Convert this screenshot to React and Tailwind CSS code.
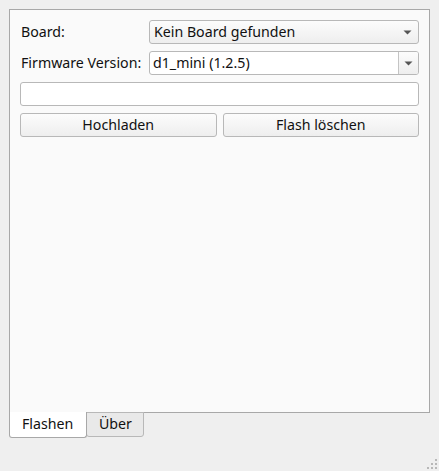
import { useState } from 'react'

function Arrow() {
  return (
    <svg width="9" height="5" viewBox="0 0 9 5" className="block">
      <path d="M0.5 0.5 L8.5 0.5 L4.5 4.5 Z" fill="#555" />
    </svg>
  )
}

function SizeGrip() {
  const dots = [
    [8, 0],
    [4, 4], [8, 4],
    [0, 8], [4, 8], [8, 8],
  ]
  return (
    <div className="absolute right-[2px] bottom-[2px] w-[10px] h-[10px]">
      {dots.map(([x, y], i) => (
        <span
          key={i}
          className="absolute w-[2px] h-[2px] bg-[#b8b8b8]"
          style={{ left: x, top: y }}
        />
      ))}
    </div>
  )
}

export default function App() {
  const [tab, setTab] = useState('flash')

  return (
    <div className="relative w-[439px] h-[471px] bg-[#efefef] text-[#111] font-['Noto_Sans','Open_Sans',sans-serif] text-[14.2px] leading-none">
      <div className="pt-[9px] px-[9px]">
        <div className="h-[404px] border border-[#a8a8a8] bg-[#fafafa] p-[10px] flex flex-col gap-[7px]">
          <div className="flex items-center h-6">
            <span className="w-[129px] pl-px">Board:</span>
            <div className="flex-1 h-6 flex items-center justify-between border border-[#b8b8b8] rounded-[3px] bg-gradient-to-b from-[#fcfcfc] to-[#eeeeee] pl-[4px] pr-[6px]">
              <span>Kein Board gefunden</span>
              <Arrow />
            </div>
          </div>

          <div className="flex items-center h-6">
            <span className="w-[129px] pl-px">Firmware Version:</span>
            <div className="flex-1 h-6 flex border border-[#b8b8b8] rounded-[3px] bg-white overflow-hidden">
              <span className="flex-1 flex items-center pl-[3px]">d1_mini (1.2.5)</span>
              <div className="w-[20px] flex items-center justify-center border-l border-[#c4c4c4] bg-gradient-to-b from-[#fcfcfc] to-[#eeeeee]">
                <Arrow />
              </div>
            </div>
          </div>

          <div className="h-6 border border-[#b8b8b8] rounded-[3px] bg-white" />

          <div className="grid grid-cols-2 gap-[6px]">
            <button className="h-6 border border-[#b8b8b8] rounded-[3px] bg-gradient-to-b from-[#fcfcfc] to-[#eeeeee]">
              Hochladen
            </button>
            <button className="h-6 border border-[#b8b8b8] rounded-[3px] bg-gradient-to-b from-[#fcfcfc] to-[#eeeeee]">
              Flash löschen
            </button>
          </div>
        </div>

        <div className="flex items-start -mt-px">
          <button
            onClick={() => setTab('flash')}
            className="w-[78px] h-[26px] border border-t-0 border-[#a8a8a8] rounded-b-[3px] bg-white text-left pl-[12px] z-10"
          >
            Flashen
          </button>
          <button
            onClick={() => setTab('about')}
            className="-ml-px w-[58px] h-[25px] border border-[#b8b8b8] rounded-b-[3px] bg-[#e9e9e9] text-left pl-[12px]"
          >
            Über
          </button>
        </div>
      </div>
      <SizeGrip />
    </div>
  )
}
